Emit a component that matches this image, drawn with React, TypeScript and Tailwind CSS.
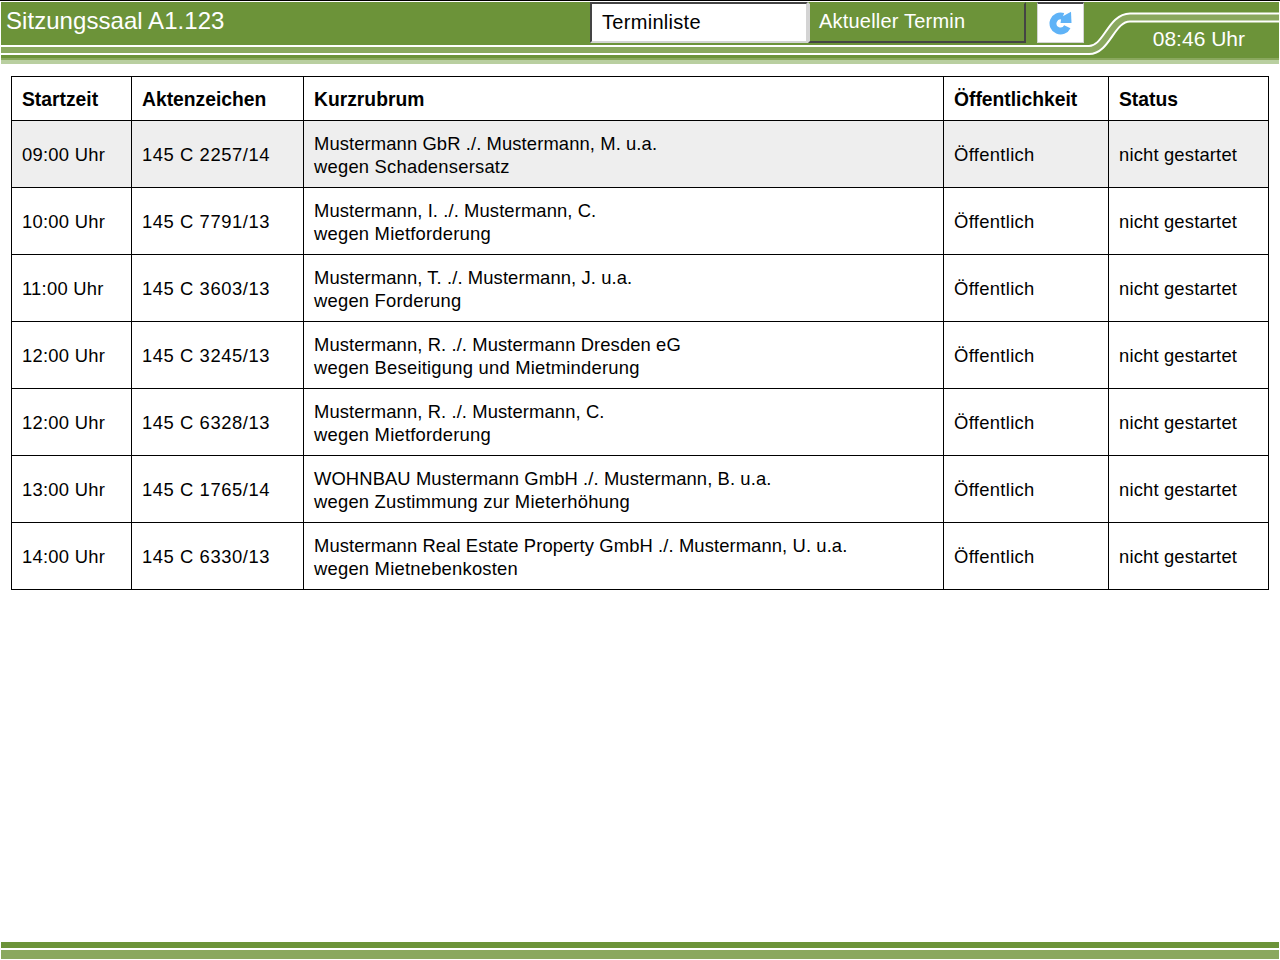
import React from 'react';

const termine = [
    { zeit: '09:00 Uhr', az: '145 C 2257/14', rubrum: 'Mustermann GbR ./. Mustermann, M. u.a.', wegen: 'wegen Schadensersatz' },
    { zeit: '10:00 Uhr', az: '145 C 7791/13', rubrum: 'Mustermann, I. ./. Mustermann, C.', wegen: 'wegen Mietforderung' },
    { zeit: '11:00 Uhr', az: '145 C 3603/13', rubrum: 'Mustermann, T. ./. Mustermann, J. u.a.', wegen: 'wegen Forderung' },
    { zeit: '12:00 Uhr', az: '145 C 3245/13', rubrum: 'Mustermann, R. ./. Mustermann Dresden eG', wegen: 'wegen Beseitigung und Mietminderung' },
    { zeit: '12:00 Uhr', az: '145 C 6328/13', rubrum: 'Mustermann, R. ./. Mustermann, C.', wegen: 'wegen Mietforderung' },
    { zeit: '13:00 Uhr', az: '145 C 1765/14', rubrum: 'WOHNBAU Mustermann GmbH ./. Mustermann, B. u.a.', wegen: 'wegen Zustimmung zur Mieterhöhung' },
    { zeit: '14:00 Uhr', az: '145 C 6330/13', rubrum: 'Mustermann Real Estate Property GmbH ./. Mustermann, U. u.a.', wegen: 'wegen Mietnebenkosten' },
];

const thClass = 'border border-black px-[10px] pt-[4px] text-left align-middle text-[19.3px] font-bold';
const tdClass = 'border border-black px-[10px] pt-[2px] align-middle';

const HeaderStripes: React.FC = () => (
    <svg className="absolute left-0 top-0 h-[58px] w-[1278px]" viewBox="0 0 1278 58" fill="none">
        <path d="M0 48 H1088 C1106 48 1110 15.5 1129 15.5 H1278" stroke="#ffffff" strokeWidth="10" />
        <path d="M0 48 H1088 C1106 48 1110 15.5 1129 15.5 H1278" stroke="#8aa85e" strokeWidth="6" />
    </svg>
);

const RefreshIcon: React.FC = () => (
    <svg width="24" height="24" viewBox="0 0 24 24" fill="none">
        <path d="M18.3 15.7 A7.5 7.5 0 1 1 14 5.4" stroke="#5fb3f7" strokeWidth="7" />
        <path d="M12.5 6 L22 0.8 L22.5 12 L11.5 12 Z" fill="#5fb3f7" />
    </svg>
);

const App: React.FC = () => {
    return (
        <div className="flex min-h-[960px] flex-col bg-white font-['Liberation_Sans',Arial,sans-serif] text-[18.4px] text-black">
            <div className="h-px bg-black" />
            <div className="h-px" />

            {/* Header */}
            <header className="relative mx-px h-[62px] bg-[#6c9339] text-white">
                <HeaderStripes />
                <div className="relative flex h-[41px]">
                    <div className="w-[589px] pl-[5px] pt-px text-[24px] leading-[36px] tracking-[0.05px]">Sitzungssaal A1.123</div>
                    <div className="w-[218px] border-t-2 border-r-2 border-b-2 border-l-2 border-t-[#444444] border-r-[#d4d4d4] border-b-[#d4d4d4] border-l-[#444444] bg-white pl-[10px] text-[20px] leading-[37px] tracking-[0.3px] text-black">
                        Terminliste
                    </div>
                    <div className="w-[218px] border-t-2 border-r-2 border-b-2 border-l-2 border-t-[#6c9339] border-r-[#444444] border-b-[#444444] border-l-[#d4d4d4] pl-[9px] text-[20px] leading-[35px] tracking-[0.2px]">
                        Aktueller Termin
                    </div>
                    <div className="ml-[11px] flex w-[47px] items-center justify-center border-t-2 border-r border-b border-l border-t-[#444444] border-r-[#d4d4d4] border-b-[#d4d4d4] border-l-[#d4d4d4] bg-white">
                        <RefreshIcon />
                    </div>
                    <div className="ml-auto pr-[34px] pt-[23px] text-[21px] leading-[28px]">08:46 Uhr</div>
                </div>
                <div className="absolute bottom-0 left-0 right-0">
                    <div className="h-[2px] bg-[#8aa85e]" />
                    <div className="h-[4px] bg-[#b9cfa0]" />
                </div>
            </header>

            {/* Terminliste */}
            <main className="mx-[11px] mt-[12px]">
                <table className="w-[1257px] table-fixed border-collapse">
                    <colgroup>
                        <col className="w-[120px]" />
                        <col className="w-[172px]" />
                        <col className="w-[640px]" />
                        <col className="w-[165px]" />
                        <col className="w-[160px]" />
                    </colgroup>
                    <thead>
                        <tr className="h-[44px]">
                            <th className={thClass}>Startzeit</th>
                            <th className={thClass}>Aktenzeichen</th>
                            <th className={thClass}>Kurzrubrum</th>
                            <th className={thClass}>Öffentlichkeit</th>
                            <th className={thClass}>Status</th>
                        </tr>
                    </thead>
                    <tbody>
                        {termine.map((termin, index) => (
                            <tr key={termin.az} className={index === 0 ? 'h-[67px] bg-[#eeeeee]' : 'h-[67px]'}>
                                <td className={`${tdClass} tracking-[0.25px]`}>{termin.zeit}</td>
                                <td className={`${tdClass} tracking-[0.57px]`}>{termin.az}</td>
                                <td className="border border-black px-[10px] pt-[1px] align-middle leading-[23px]">
                                    <div className="tracking-[0.1px]">{termin.rubrum}</div>
                                    <div className="tracking-[0.22px]">{termin.wegen}</div>
                                </td>
                                <td className={`${tdClass} tracking-[0.33px]`}>Öffentlich</td>
                                <td className={`${tdClass} tracking-[0.17px]`}>nicht gestartet</td>
                            </tr>
                        ))}
                    </tbody>
                </table>
            </main>

            {/* Footer */}
            <footer className="mx-px mb-px mt-auto">
                <div className="h-[6px] bg-[#6c9339]" />
                <div className="mt-[2px] h-[9px] bg-[#8aa85e]" />
            </footer>
        </div>
    );
};

export default App;
